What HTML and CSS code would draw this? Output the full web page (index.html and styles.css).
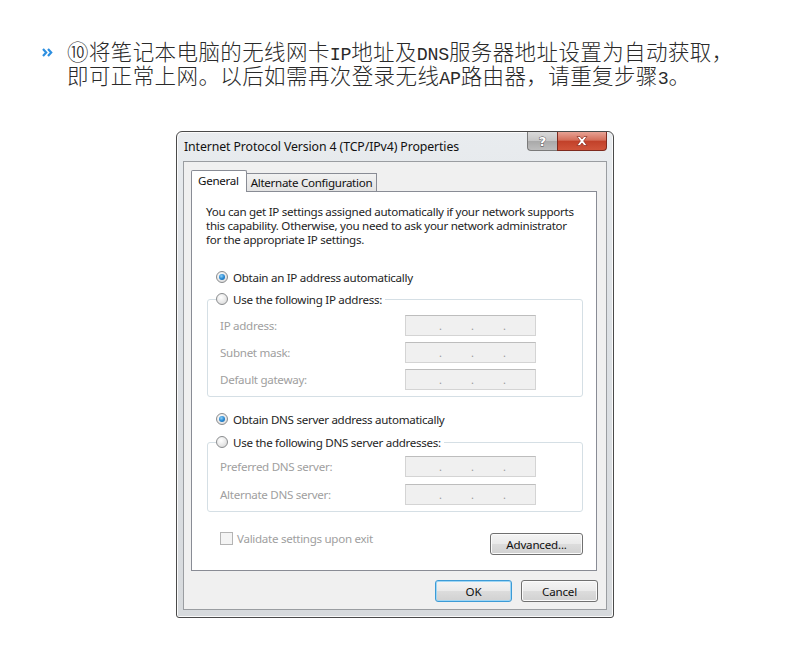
FILE: index.html
```html
<!DOCTYPE html>
<html>
<head>
   <meta charset="utf-8">
   <title>IPv4 设置</title>
   <link rel="stylesheet" href="styles.css">
</head>
<body>
   <div class="page">
       <div class="intro">
           <svg class="chevron" width="11" height="9" viewBox="0 0 11 9">
               <polyline points="1,1 4.2,4.5 1,8" fill="none" stroke="#2d8fe0" stroke-width="2.2"/>
               <polyline points="6,1 9.2,4.5 6,8" fill="none" stroke="#2d8fe0" stroke-width="2.2"/>
           </svg>
           <div class="intro-text">
               <p class="intro-line">⑩将笔记本电脑的无线网卡<span class="lat">IP</span>地址及<span class="lat">DNS</span>服务器地址设置为自动获取，</p>
               <p class="intro-line">即可正常上网。以后如需再次登录无线<span class="lat">AP</span>路由器，请重复步骤<span class="lat">3</span>。</p>
           </div>
       </div>

       <div class="dialog">
           <div class="titlebar">
               <span class="title">Internet Protocol Version 4 (TCP/IPv4) Properties</span>
               <div class="caption-btns">
                   <span class="cap-help">?</span>
                   <span class="cap-close">
                       <svg width="12" height="10" viewBox="0 0 12 10">
                           <path d="M1 0.5 L4 0.5 L6 3 L8 0.5 L11 0.5 L7.6 5 L11 9.5 L8 9.5 L6 7 L4 9.5 L1 9.5 L4.4 5 Z" fill="#fff" stroke="#8a2a1c" stroke-width="0.7"/>
                       </svg>
                   </span>
               </div>
           </div>

           <div class="client">
               <div class="tabs">
                   <span class="tab active">General</span>
                   <span class="tab">Alternate Configuration</span>
               </div>

               <div class="panel">
                   <p class="info">You can get IP settings assigned automatically if your network supports this capability. Otherwise, you need to ask your network administrator for the appropriate IP settings.</p>

                   <div class="option first">
                       <span class="radio checked"></span>
                       <span>Obtain an IP address automatically</span>
                   </div>

                   <fieldset class="group">
                       <legend class="option">
                           <span class="radio"></span>
                           <span>Use the following IP address:</span>
                       </legend>
                       <div class="field-grid">
                           <span class="field-label">IP address:</span>
                           <span class="ip-box"><i>.</i><i>.</i><i>.</i></span>
                           <span class="field-label">Subnet mask:</span>
                           <span class="ip-box"><i>.</i><i>.</i><i>.</i></span>
                           <span class="field-label">Default gateway:</span>
                           <span class="ip-box"><i>.</i><i>.</i><i>.</i></span>
                       </div>
                   </fieldset>

                   <div class="option dns">
                       <span class="radio checked"></span>
                       <span>Obtain DNS server address automatically</span>
                   </div>

                   <fieldset class="group dns-group">
                       <legend class="option">
                           <span class="radio"></span>
                           <span>Use the following DNS server addresses:</span>
                       </legend>
                       <div class="field-grid">
                           <span class="field-label">Preferred DNS server:</span>
                           <span class="ip-box"><i>.</i><i>.</i><i>.</i></span>
                           <span class="field-label">Alternate DNS server:</span>
                           <span class="ip-box"><i>.</i><i>.</i><i>.</i></span>
                       </div>
                   </fieldset>

                   <div class="bottom-row">
                       <label class="validate">
                           <span class="checkbox"></span>
                           <span>Validate settings upon exit</span>
                       </label>
                       <button class="win-btn advanced">Advanced...</button>
                   </div>
               </div>

               <div class="actions">
                   <button class="win-btn default">OK</button>
                   <button class="win-btn">Cancel</button>
               </div>
           </div>
       </div>
   </div>
</body>
</html>
```

FILE: styles.css
```css
* {
    margin: 0;
    padding: 0;
    box-sizing: border-box;
}

body {
    background: #FFFFFF;
    color: #1E1E1E;
    font-family: "Noto Sans", "Open Sans", sans-serif;
}

.page {
    width: 790px;
    height: 669px;
    overflow: hidden;
}

/* heading text above the screenshot */

.intro {
    display: flex;
    align-items: flex-start;
    padding: 39px 0 0 42px;
}

.chevron {
    margin-top: 9px;
    margin-right: 14px;
    flex-shrink: 0;
}

.intro-text {
    font-family: "Noto Sans CJK SC", sans-serif;
    font-weight: 300;
    font-size: 21.5px;
    color: #2A2A2A;
    white-space: nowrap;
}

.intro-line {
    height: 24px;
    line-height: 24px;
    letter-spacing: 0.4px;
}

.lat {
    font-family: "Liberation Mono", monospace;
    font-size: 18.3px;
    line-height: 1;
    letter-spacing: -0.3px;
}

/* window */

.dialog {
    width: 438px;
    height: 487px;
    margin: 44px 0 0 176px;
    padding: 0 6px 7px 6px;
    border: 1px solid #4A4A4A;
    border-radius: 6px 6px 3px 3px;
    background: linear-gradient(to bottom, #E9ECEF 0%, #DDE1E5 40%, #D7DADD 100%);
    box-shadow: inset 1px 1px 0 #FAFAFA, inset -1px -1px 0 #FAFAFA;
    display: flex;
    flex-direction: column;
}

.titlebar {
    height: 29px;
    display: flex;
    align-items: center;
    position: relative;
}

.title {
    font-size: 12.3px;
    padding-left: 1px;
    color: #111;
    letter-spacing: -0.1px;
}

.caption-btns {
    position: absolute;
    top: 0;
    right: 0;
    display: flex;
}

.cap-help,
.cap-close {
    height: 19px;
    display: flex;
    align-items: center;
    justify-content: center;
    border: 1px solid #7A7A7A;
    border-top: none;
}

.cap-help {
    width: 30px;
    border-radius: 0 0 0 4px;
    border-right: none;
    background: linear-gradient(to bottom, #DADADA 0%, #C4C4C4 50%, #A9A9A9 51%, #BDBDBD 100%);
    color: #FFFFFF;
    font-family: "DejaVu Sans", sans-serif;
    font-weight: 700;
    font-size: 13px;
    -webkit-text-stroke: 0.8px #4A4A4A;
    paint-order: stroke fill;
}

.cap-close {
    width: 50px;
    border-radius: 0 0 4px 0;
    border-color: #7E2A1E;
    background: linear-gradient(to bottom, #E7A294 0%, #D46E5A 45%, #C2412A 52%, #D0543A 100%);
}

.client {
    flex: 1;
    border: 1px solid #9A9DA1;
    background: #F0F0F0;
    padding: 8px 9px 0 7px;
}

.tabs {
    display: flex;
    align-items: flex-end;
    height: 21px;
    position: relative;
    z-index: 1;
}

.tab {
    font-size: 11.6px;
    letter-spacing: -0.3px;
    height: 18px;
    padding: 0 4px;
    border: 1px solid #898C95;
    border-bottom: none;
    background: linear-gradient(to bottom, #F2F2F2, #E3E3E3);
    display: flex;
    align-items: center;
    color: #111;
}

.tab.active {
    height: 22px;
    margin-bottom: -1px;
    padding: 0 7px 3px 6px;
    background: #FFFFFF;
    border-radius: 2px 2px 0 0;
}

.tab + .tab {
    border-left: none;
}

.panel {
    border: 1px solid #898C95;
    background: #FFFFFF;
    padding: 13px 13px 15px 14px;
    font-size: 11.6px;
    letter-spacing: -0.3px;
}

.info {
    line-height: 14px;
}

.option {
    display: flex;
    align-items: center;
    gap: 5px;
    height: 16px;
}

.option.first {
    margin: 22px 0 0 10px;
}

.option.dns {
    margin: 14px 0 0 10px;
}

.radio {
    width: 12px;
    height: 12px;
    border-radius: 50%;
    border: 1px solid #8A8C8E;
    background: radial-gradient(circle at 40% 35%, #FFFFFF 0%, #E8E8E8 55%, #CFCFCF 100%);
    display: flex;
    align-items: center;
    justify-content: center;
}

.radio.checked::after {
    content: "";
    width: 6px;
    height: 6px;
    border-radius: 50%;
    background: radial-gradient(circle at 40% 35%, #8FD0F5 0%, #2A8AD4 50%, #0F5A9E 100%);
}

.group {
    border: 1px solid #D5DFE5;
    border-radius: 3px;
    margin: 6px 0 0 1px;
    padding: 8px 0 6px 12px;
}

.group legend {
    margin-left: -4px;
    padding-right: 3px;
}

.dns-group {
    margin-top: 7px;
    padding-top: 6px;
}

.field-grid {
    display: grid;
    grid-template-columns: 185px 131px;
    row-gap: 6px;
    align-items: center;
}

.dns-group .field-grid {
    row-gap: 7px;
}

.field-label {
    color: #A0A0A0;
}

.ip-box {
    height: 21px;
    border: 1px solid #D4D4D4;
    border-top-color: #BDBDBD;
    background: #F0F0F0;
    display: flex;
    padding: 2px 0 0 33px;
    gap: 28px;
    color: #9A9A9A;
    font-size: 11px;
}

.ip-box i {
    font-style: normal;
    width: 4px;
}

.bottom-row {
    display: flex;
    justify-content: space-between;
    align-items: flex-start;
    margin-top: 19px;
    padding-left: 14px;
}

.validate {
    display: flex;
    align-items: center;
    gap: 4px;
    color: #A0A0A0;
    height: 14px;
}

.checkbox {
    width: 13px;
    height: 13px;
    border: 1px solid #B4B4B4;
    background: #F4F4F4;
}

.win-btn {
    font-family: "Noto Sans", "Open Sans", sans-serif;
    font-size: 11.6px;
    letter-spacing: -0.2px;
    color: #111;
    height: 22px;
    width: 77px;
    border: 1px solid #707070;
    border-radius: 3px;
    background: linear-gradient(to bottom, #F4F4F4 0%, #EAEAEA 48%, #DCDCDC 52%, #D1D1D1 100%);
    box-shadow: inset 0 0 0 1px #FBFBFB;
}

.advanced {
    width: 93px;
    margin-top: 2px;
}

.actions {
    display: flex;
    justify-content: flex-end;
    gap: 9px;
    margin-top: 9px;
    margin-right: -1px;
}

.win-btn.default {
    border-color: #3C9BD6;
    box-shadow: inset 0 0 0 1px #9ED6F5;
}
```
